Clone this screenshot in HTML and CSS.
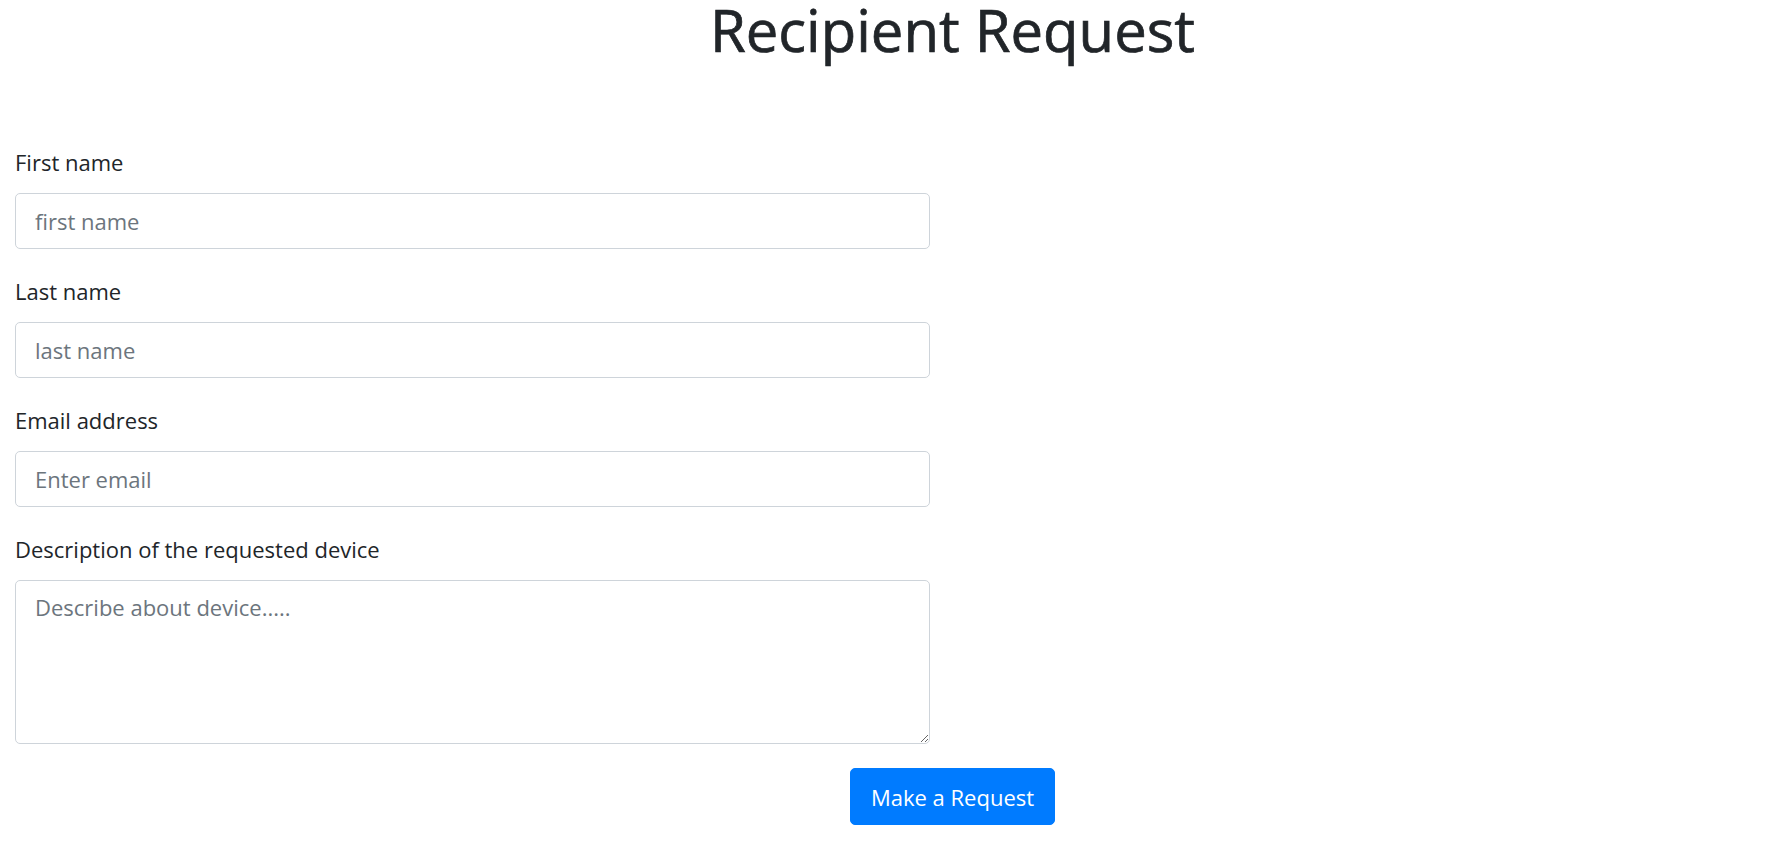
FILE: index.html
```html
<!DOCTYPE html>
<html lang="en">
<head>
<meta charset="utf-8">
<title>Recipient Request</title>
<link rel="stylesheet" href="styles.css">
</head>
<body>
  <div class="page">
    <header class="heading">
      <h1 class="title">Recipient Request</h1>
    </header>
    <form class="request-form">
      <div class="fields">
        <div class="field">
          <label class="field-label" for="first">First name</label>
          <input class="field-input" id="first" type="text" placeholder="first name">
        </div>
        <div class="field">
          <label class="field-label" for="last">Last name</label>
          <input class="field-input" id="last" type="text" placeholder="last name">
        </div>
        <div class="field">
          <label class="field-label" for="email">Email address</label>
          <input class="field-input" id="email" type="email" placeholder="Enter email">
        </div>
        <div class="field">
          <label class="field-label" for="desc">Description of the requested device</label>
          <textarea class="field-input field-textarea" id="desc" placeholder="Describe about device....."></textarea>
        </div>
      </div>
      <div class="actions">
        <button class="btn-primary" type="submit">Make a Request</button>
      </div>
    </form>
  </div>
</body>
</html>
```

FILE: styles.css
```css
* { box-sizing: border-box; }

html, body {
  margin: 0;
  padding: 0;
  background: #ffffff;
}

body {
  font-family: "Open Sans", "Noto Sans", "Liberation Sans", sans-serif;
  color: #212529;
}

.page {
  padding: 0 15px;
}

.heading {
  padding-left: 122px;
  text-align: center;
}

.title {
  margin: 0;
  font-size: 58px;
  font-weight: 400;
  line-height: 60px;
  color: #212529;
  -webkit-text-stroke: 0.7px #212529;
}

.request-form {
  display: flex;
  flex-direction: column;
  padding-top: 89px;
}

.fields {
  width: 915px;
  display: flex;
  flex-direction: column;
  gap: 29px;
}

.field {
  display: flex;
  flex-direction: column;
  gap: 14px;
}

.field-label {
  font-size: 22px;
  line-height: 29px;
  margin-top: -1px;
  margin-bottom: 2px;
  color: #212529;
}

.field-input {
  height: 56px;
  width: 100%;
  border: 1px solid #ced4da;
  border-radius: 5px;
  padding: 0 19px;
  font-family: inherit;
  font-size: 22px;
  color: #495057;
  background: #fff;
  outline: none;
}

.field-input::placeholder {
  color: #6c757d;
  opacity: 1;
}

.field-textarea {
  height: 164px;
  padding: 11px 19px;
  line-height: 30px;
  resize: vertical;
}

.actions {
  display: flex;
  justify-content: center;
  padding-left: 122px;
  padding-top: 24px;
}

.btn-primary {
  height: 57px;
  padding: 0 20px;
  border: 1px solid #007bff;
  border-radius: 5px;
  background: #007bff;
  color: #ffffff;
  font-family: inherit;
  font-size: 22px;
  cursor: pointer;
}
```
